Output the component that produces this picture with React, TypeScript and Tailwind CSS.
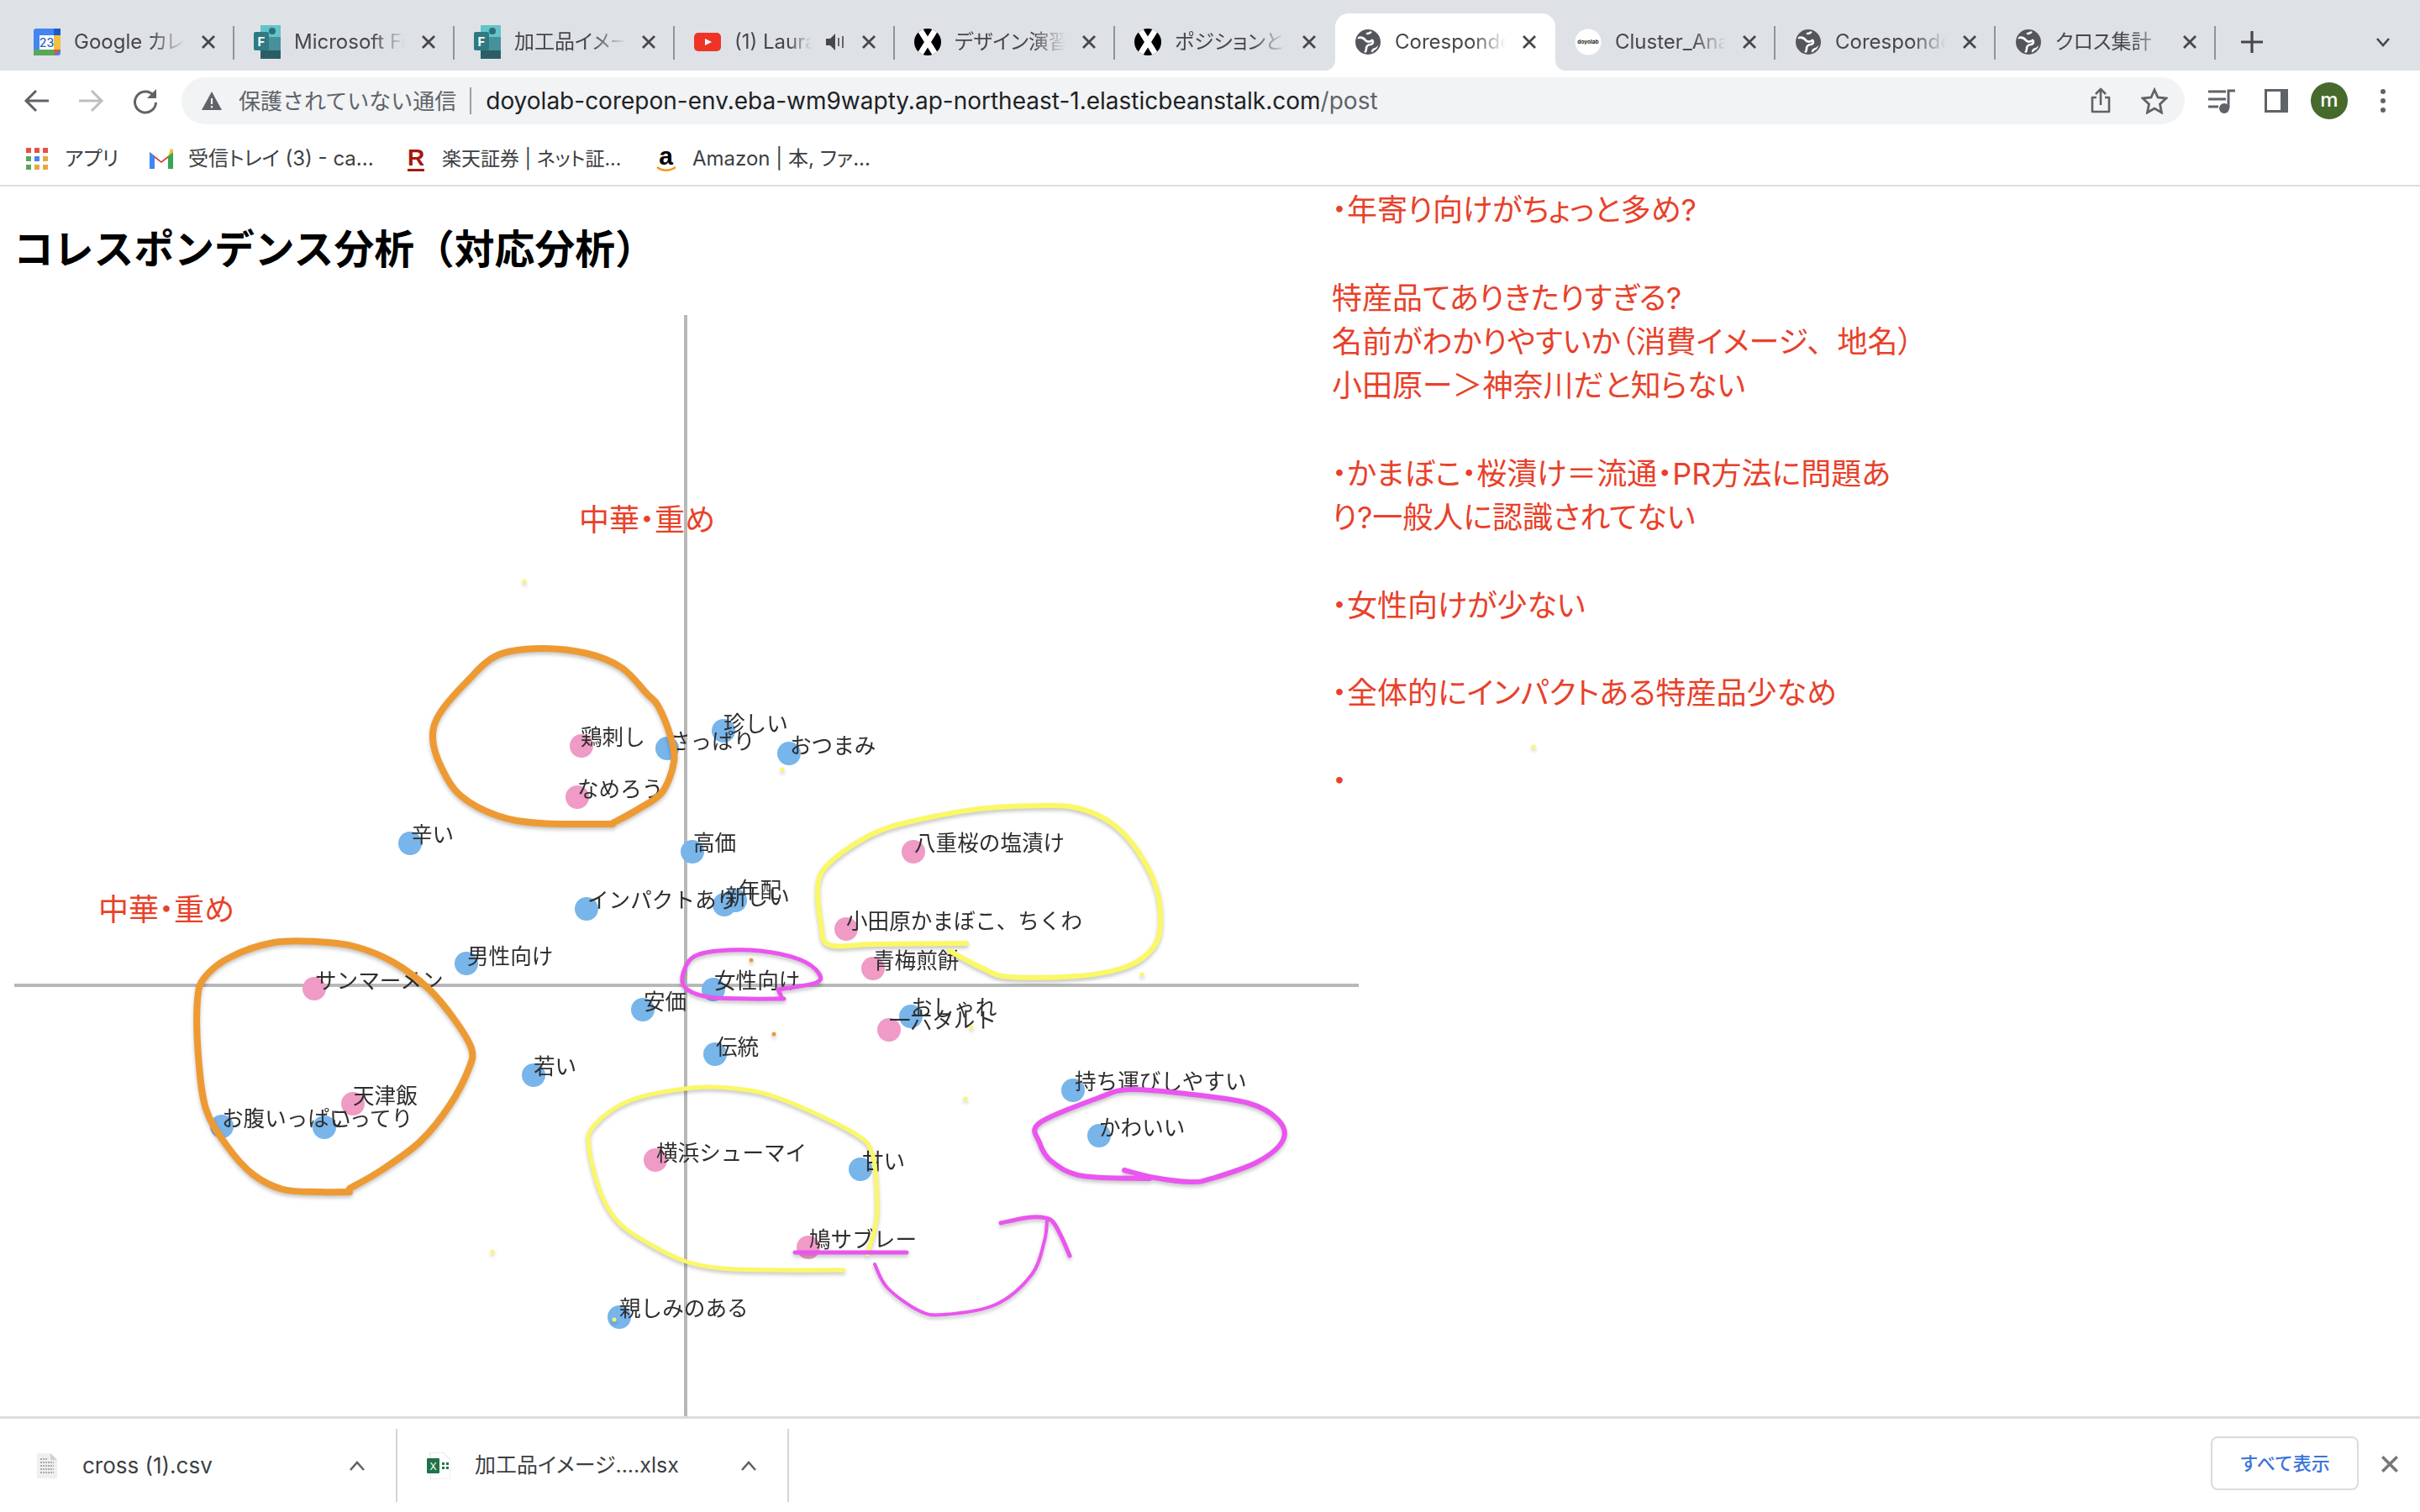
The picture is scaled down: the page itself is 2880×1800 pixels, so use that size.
import type { ReactNode } from 'react'

type Pt = [number, number]

const CHART_X = 17
const CHART_Y = 375

const points = [
  { label: '鶏刺し', x: 692, y: 888, tx: 692, ty: 878, kind: 'pink' },
  { label: 'さっぱり', x: 794, y: 891, tx: 797, ty: 883, kind: 'blue' },
  { label: '珍しい', x: 861, y: 870, tx: 862, ty: 862, kind: 'blue' },
  { label: 'おつまみ', x: 939, y: 897, tx: 941, ty: 888, kind: 'blue' },
  { label: 'なめろう', x: 687, y: 949, tx: 688, ty: 940, kind: 'pink' },
  { label: '辛い', x: 488, y: 1004, tx: 490, ty: 994, kind: 'blue' },
  { label: '高価', x: 824, y: 1014, tx: 826, ty: 1004, kind: 'blue' },
  { label: 'インパクトあり', x: 698, y: 1082, tx: 700, ty: 1072, kind: 'blue' },
  { label: '新しい', x: 862, y: 1077, tx: 864, ty: 1068, kind: 'blue' },
  { label: '年配', x: 875, y: 1072, tx: 880, ty: 1060, kind: 'blue' },
  { label: '八重桜の塩漬け', x: 1087, y: 1014, tx: 1089, ty: 1004, kind: 'pink' },
  { label: '小田原かまぼこ、ちくわ', x: 1007, y: 1106, tx: 1008, ty: 1097, kind: 'pink' },
  { label: '青梅煎餅', x: 1039, y: 1153, tx: 1040, ty: 1144, kind: 'pink' },
  { label: '女性向け', x: 849, y: 1178, tx: 851, ty: 1168, kind: 'blue' },
  { label: '男性向け', x: 555, y: 1147, tx: 557, ty: 1139, kind: 'blue' },
  { label: 'サンマーメン', x: 374, y: 1177, tx: 376, ty: 1168, kind: 'pink' },
  { label: '安価', x: 765, y: 1202, tx: 767, ty: 1193, kind: 'blue' },
  { label: 'おしゃれ', x: 1084, y: 1210, tx: 1085, ty: 1200, kind: 'blue' },
  { label: '一六タルト', x: 1058, y: 1226, tx: 1059, ty: 1215, kind: 'pink' },
  { label: '伝統', x: 851, y: 1255, tx: 853, ty: 1247, kind: 'blue' },
  { label: '若い', x: 635, y: 1280, tx: 636, ty: 1270, kind: 'blue' },
  { label: '天津飯', x: 420, y: 1314, tx: 421, ty: 1305, kind: 'pink' },
  { label: 'お腹いっぱい', x: 264, y: 1341, tx: 265, ty: 1332, kind: 'blue' },
  { label: 'こってり', x: 386, y: 1342, tx: 393, ty: 1332, kind: 'blue' },
  { label: '横浜シューマイ', x: 780, y: 1381, tx: 782, ty: 1373, kind: 'pink' },
  { label: '甘い', x: 1024, y: 1392, tx: 1027, ty: 1383, kind: 'blue' },
  { label: '持ち運びしやすい', x: 1277, y: 1298, tx: 1280, ty: 1288, kind: 'blue' },
  { label: 'かわいい', x: 1308, y: 1352, tx: 1309, ty: 1343, kind: 'blue' },
  { label: '鳩サブレー', x: 962, y: 1485, tx: 964, ty: 1476, kind: 'pink' },
  { label: '親しみのある', x: 737, y: 1568, tx: 738, ty: 1558, kind: 'blue' },
]

// hand drawn marks, page coordinates
const strokes: { color: string; width: number; pts: Pt[] }[] = [
  {
    color: '#ee9a33',
    width: 8,
    pts: [[729, 981], [643, 980], [592, 971], [548, 947], [525, 913], [515, 879], [523, 850], [556, 811], [592, 780], [643, 772], [699, 778], [740, 795], [770, 826], [783, 840], [798, 877], [802, 907], [788, 943], [760, 963], [729, 980]],
  },
  {
    color: '#ee9a33',
    width: 8,
    pts: [[416, 1419], [382, 1419], [337, 1416], [301, 1398], [270, 1364], [245, 1320], [236, 1257], [235, 1190], [244, 1163], [275, 1139], [326, 1122], [377, 1121], [423, 1127], [469, 1146], [510, 1177], [541, 1214], [561, 1248], [558, 1272], [535, 1316], [500, 1359], [454, 1393], [416, 1415]],
  },
  {
    color: '#fbf866',
    width: 6,
    pts: [[1150, 1123], [1040, 1124], [987, 1125], [977, 1100], [974, 1050], [992, 1023], [1038, 993], [1084, 978], [1165, 963], [1242, 959], [1283, 962], [1323, 980], [1354, 1013], [1377, 1060], [1380, 1110], [1364, 1137], [1334, 1153], [1283, 1162], [1201, 1163], [1170, 1153], [1130, 1132]],
  },
  {
    color: '#fbf866',
    width: 5,
    pts: [[1004, 1512], [928, 1512], [860, 1510], [817, 1502], [775, 1482], [738, 1457], [716, 1423], [701, 1367], [707, 1340], [750, 1310], [824, 1295], [885, 1297], [934, 1310], [1013, 1347], [1038, 1373], [1044, 1433], [1041, 1463], [1032, 1493]],
  },
  {
    color: '#ea55f0',
    width: 5,
    pts: [[926, 1178], [971, 1170], [974, 1158], [951, 1142], [905, 1132], [854, 1132], [824, 1140], [812, 1163], [818, 1178], [844, 1187], [890, 1189], [933, 1189]],
  },
  { color: '#ea55f0', width: 5, pts: [[926, 1178], [930, 1187]] },
  { color: '#ea55f0', width: 5, pts: [[946, 1491], [1079, 1491]] },
  {
    color: '#ea55f0',
    width: 4,
    pts: [[1041, 1505], [1056, 1533], [1093, 1560], [1123, 1565], [1185, 1553], [1228, 1517], [1243, 1477], [1246, 1453]],
  },
  { color: '#ea55f0', width: 5, pts: [[1191, 1456], [1227, 1449], [1250, 1452], [1262, 1470], [1273, 1495]] },
  {
    color: '#ea55f0',
    width: 6,
    pts: [[1338, 1393], [1374, 1402], [1417, 1407], [1442, 1403], [1497, 1383], [1527, 1357], [1521, 1333], [1485, 1313], [1411, 1302], [1344, 1297], [1307, 1307], [1237, 1337], [1237, 1360], [1252, 1383], [1289, 1400], [1368, 1403]],
  },
]

const specks: [number, number, string][] = [
  [624, 692, '#fbf866'],
  [931, 916, '#fbf866'],
  [894, 1143, '#ee9a33'],
  [921, 1231, '#ee9a33'],
  [1359, 1160, '#fbf866'],
  [1156, 1223, '#fbf866'],
  [1149, 1308, '#fbf866'],
  [731, 1571, '#fbf866'],
  [586, 1490, '#fbf866'],
  [1825, 889, '#fbf866'],
]

const notes = [
  '・年寄り向けがちょっと多め?',
  '',
  '特産品てありきたりすぎる?',
  '名前がわかりやすいか（消費イメージ、\u2002地名）',
  '小田原ー＞神奈川だと知らない',
  '',
  '・かまぼこ・桜漬け＝流通・PR方法に問題あ',
  'り?一般人に認識されてない',
  '',
  '・女性向けが少ない',
  '',
  '・全体的にインパクトある特産品少なめ',
  '',
  '・',
]

const tabs: { title: string; icon: ReactNode; active?: boolean; audio?: boolean; sep?: boolean }[] = [
  { title: 'Google カレンダー', icon: <CalendarIcon />, sep: true },
  { title: 'Microsoft Forms', icon: <FormsIcon />, sep: true },
  { title: '加工品イメージ調査', icon: <FormsIcon />, sep: true },
  { title: '(1) Laura Branigan', icon: <YoutubeIcon />, audio: true, sep: true },
  { title: 'デザイン演習', icon: <CrossIcon />, sep: true },
  { title: 'ポジションと戦略', icon: <CrossIcon /> },
  { title: 'Coresponde', icon: <GlobeIcon />, active: true },
  { title: 'Cluster_Analysis', icon: <DoyolabIcon />, sep: true },
  { title: 'Corespondence', icon: <GlobeIcon />, sep: true },
  { title: 'クロス集計', icon: <GlobeIcon />, sep: true },
]

function smooth(pts: Pt[]) {
  let d = `M${pts[0][0]} ${pts[0][1]}`
  for (let i = 0; i < pts.length - 1; i++) {
    const p0 = pts[Math.max(i - 1, 0)]
    const p1 = pts[i]
    const p2 = pts[i + 1]
    const p3 = pts[Math.min(i + 2, pts.length - 1)]
    const c1x = p1[0] + (p2[0] - p0[0]) / 6
    const c1y = p1[1] + (p2[1] - p0[1]) / 6
    const c2x = p2[0] - (p3[0] - p1[0]) / 6
    const c2y = p2[1] - (p3[1] - p1[1]) / 6
    d += ` C${c1x} ${c1y} ${c2x} ${c2y} ${p2[0]} ${p2[1]}`
  }
  return d
}

function CalendarIcon() {
  return (
    <svg viewBox="0 0 32 32" className="h-8 w-8 shrink-0">
      <rect width="32" height="32" rx="3" fill="#4285f4" />
      <rect x="24" width="8" height="8" fill="#1a5bc4" />
      <rect x="24" y="8" width="8" height="17" fill="#f4bf3e" />
      <rect y="25" width="26" height="7" fill="#57a85b" />
      <path d="M25 25h7l-7 7z" fill="#e8503e" />
      <rect x="7" y="8" width="17" height="17" fill="#fff" />
      <text x="15.5" y="22" textAnchor="middle" fontSize="14" fontWeight="500" fill="#2a62c8" fontFamily="Inter, sans-serif">23</text>
    </svg>
  )
}

function FormsIcon() {
  return (
    <svg viewBox="0 0 32 40" className="h-10 w-8 shrink-0">
      <rect x="8" y="0" width="24" height="20" fill="#62c4c9" />
      <circle cx="22" cy="7" r="4" fill="#2d6f78" />
      <rect x="8" y="20" width="24" height="20" fill="#2b5d66" />
      <rect x="16" y="14" width="16" height="16" fill="#46919a" />
      <rect x="0" y="8" width="18" height="22" rx="2" fill="#2f7a82" />
      <text x="9" y="25" textAnchor="middle" fontSize="15" fontWeight="700" fill="#fff" fontFamily="Inter, sans-serif">F</text>
    </svg>
  )
}

function YoutubeIcon() {
  return (
    <svg viewBox="0 0 32 24" className="h-6 w-8 shrink-0">
      <rect width="32" height="22" y="1" rx="5" fill="#ee3426" />
      <path d="M13 8l8 4-8 4z" fill="#fff" />
    </svg>
  )
}

function CrossIcon() {
  return (
    <svg viewBox="0 0 32 32" className="h-8 w-8 shrink-0">
      <clipPath id="cross-clip">
        <circle cx="16" cy="16" r="16" />
      </clipPath>
      <circle cx="16" cy="16" r="16" fill="#000" />
      <path d="M6 0l20 32M26 0L6 32" stroke="#fff" strokeWidth="7" clipPath="url(#cross-clip)" />
    </svg>
  )
}

function GlobeIcon() {
  return (
    <svg viewBox="0 0 32 32" className="h-8 w-8 shrink-0">
      <circle cx="16" cy="16" r="14" fill="#54565b" />
      <g fill="none" stroke="#fff" strokeWidth="2.600" strokeLinecap="round">
        <path d="M4 11c4-1 7 0 9 3 2 2 5 2 8 0" />
        <path d="M21 14c2 2 1 4-2 5-3 0-5 2-5 5 0 2-1 4-2 5" />
        <path d="M21 28c0-2 2-4 4-4 1 0 2-1 3-2" />
        <path d="M20 3c-1 2-3 3-5 3" />
      </g>
      <circle cx="16" cy="16" r="14" fill="none" stroke="#54565b" strokeWidth="2" />
    </svg>
  )
}

function DoyolabIcon() {
  return (
    <svg viewBox="0 0 32 32" className="h-8 w-8 shrink-0">
      <circle cx="16" cy="16" r="15.5" fill="#fff" />
      <text x="16" y="18" textAnchor="middle" fontSize="6.5" fontWeight="700" fill="#222" fontFamily="Inter, sans-serif">doyolab</text>
    </svg>
  )
}

function CloseIcon({ size = 'h-6 w-6', color = '#45474a' }: { size?: string; color?: string }) {
  return (
    <svg viewBox="0 0 24 24" className={`${size} shrink-0`}>
      <path d="M5 5l14 14M19 5L5 19" stroke={color} strokeWidth="2.8" fill="none" />
    </svg>
  )
}

function Tab({ tab }: { tab: (typeof tabs)[number] }) {
  return (
    <div
      className={`relative flex h-[68px] w-[262px] shrink-0 items-center gap-4 pl-[23px] pr-[19px] ${
        tab.active ? 'rounded-t-[16px] bg-white' : ''
      }`}
    >
      {tab.active && (
        <>
          <div className="absolute -left-3 bottom-0 h-3 w-3 bg-white">
            <div className="h-full w-full rounded-br-[12px] bg-[#dee1e6]" />
          </div>
          <div className="absolute -right-3 bottom-0 h-3 w-3 bg-white">
            <div className="h-full w-full rounded-bl-[12px] bg-[#dee1e6]" />
          </div>
        </>
      )}
      <div className="flex w-8 shrink-0 justify-center">{tab.icon}</div>
      <div className="min-w-0 flex-1 overflow-hidden whitespace-nowrap text-[24px] leading-8 text-[#45474a] [font-feature-settings:'palt'] [mask-image:linear-gradient(90deg,#000_70%,transparent_100%)]">
        {tab.title}
      </div>
      {tab.audio && (
        <svg viewBox="0 0 24 24" className="h-6 w-6 shrink-0">
          <path d="M1 8h5l6-6v20l-6-6H1z" fill="#45474a" />
          <path d="M16 7v10M21 5v14" stroke="#45474a" strokeWidth="1.6" />
        </svg>
      )}
      <CloseIcon />
      {tab.sep && <div className="absolute right-0 top-[15px] h-10 w-[2px] bg-[#909398]" />}
    </div>
  )
}

function TabStrip() {
  return (
    <div className="flex h-[84px] shrink-0 items-end bg-[#dee1e6] pl-[17px]">
      {tabs.map((tab, index) => (
        <Tab key={index} tab={tab} />
      ))}
      <div className="mb-[18px] ml-[27px] flex w-8 justify-center">
        <svg viewBox="0 0 32 32" className="h-8 w-8">
          <path d="M16 3v26M3 16h26" stroke="#45474a" strokeWidth="3.2" />
        </svg>
      </div>
      <div className="mb-[22px] ml-[124px] flex w-8 justify-center">
        <svg viewBox="0 0 24 24" className="h-6 w-6">
          <path d="M5 8l7 8 7-8" stroke="#45474a" strokeWidth="2.6" fill="none" />
        </svg>
      </div>
    </div>
  )
}

function Toolbar() {
  return (
    <div className="flex h-[84px] shrink-0 items-center bg-white pb-3">
      <div className="flex w-[216px] shrink-0 items-center pl-[28px]">
        <svg viewBox="0 0 32 32" className="h-8 w-8">
          <path d="M30 16H4M15 4L3 16l12 12" stroke="#5f6368" strokeWidth="3" fill="none" />
        </svg>
        <svg viewBox="0 0 32 32" className="ml-[32px] h-8 w-8">
          <path d="M2 16h26M17 4l12 12-12 12" stroke="#bcbec2" strokeWidth="3" fill="none" />
        </svg>
        <svg viewBox="0 0 32 32" className="ml-[33px] h-8 w-8">
          <path d="M26 10a12.500 12.500 0 1 0 2.500 8" stroke="#5f6368" strokeWidth="3" fill="none" />
          <path d="M29 2v11H18z" fill="#5f6368" />
        </svg>
      </div>
      <div className="flex h-14 w-[2384px] shrink-0 items-center rounded-full bg-[#f1f3f4] pl-[24px] pr-[20px]">
        <svg viewBox="0 0 24 24" className="h-6 w-6 shrink-0">
          <path d="M12 1l12 22H0z" fill="#5f6368" />
          <path d="M12 9v7M12 18v2.500" stroke="#f1f3f4" strokeWidth="2.200" />
        </svg>
        <span className="ml-[20px] whitespace-nowrap text-[26px] text-[#5f6368]">保護されていない通信</span>
        <div className="ml-[16px] h-8 w-[2px] bg-[#9a9da1]" />
        <span className="ml-[17px] whitespace-nowrap text-[28px] text-[#202124]">
          doyolab-corepon-env.eba-wm9wapty.ap-northeast-1.elasticbeanstalk.com<span className="text-[#5f6368]">/post</span>
        </span>
        <svg viewBox="0 0 28 32" className="ml-auto h-8 w-7 shrink-0">
          <path d="M9 12H4v17h20V12h-5M14 21V3M8 8l6-6 6 6" stroke="#5f6368" strokeWidth="2.600" fill="none" strokeLinejoin="round" />
        </svg>
        <svg viewBox="0 0 32 32" className="ml-[34px] h-8 w-8 shrink-0">
          <path d="M16 3l4 9 10 1-7.500 7 2 10-8.500-5-8.500 5 2-10L2 13l10-1z" stroke="#5f6368" strokeWidth="2.800" fill="none" />
        </svg>
      </div>
      <svg viewBox="0 0 34 30" className="ml-[27px] h-[30px] w-[34px] shrink-0">
        <path d="M1 4h21M1 13h21M1 22h12M25 24V3h8" stroke="#5f6368" strokeWidth="3" fill="none" />
        <circle cx="20" cy="24" r="6" fill="#5f6368" />
      </svg>
      <svg viewBox="0 0 28 28" className="ml-[34px] h-7 w-7 shrink-0">
        <rect width="28" height="28" fill="#5f6368" />
        <rect x="3" y="3" width="16" height="22" fill="#fff" />
      </svg>
      <div className="ml-[27px] flex h-11 w-11 shrink-0 items-center justify-center rounded-full bg-[#456a2b] pb-[3px] text-[24px] font-medium text-white">
        m
      </div>
      <div className="ml-[39px] flex flex-col gap-[5px]">
        <div className="h-[6px] w-[6px] rounded-full bg-[#5f6368]" />
        <div className="h-[6px] w-[6px] rounded-full bg-[#5f6368]" />
        <div className="h-[6px] w-[6px] rounded-full bg-[#5f6368]" />
      </div>
    </div>
  )
}

function BookmarksBar() {
  return (
    <div className="flex h-[54px] shrink-0 items-center border-b-2 border-[#dadce0] bg-white pb-[10px] pl-[31px] text-[24px] text-[#3c4043] [font-feature-settings:'palt']">
      <svg viewBox="0 0 26 26" className="h-[26px] w-[26px] shrink-0">
        <path d="M0 0h6v6H0zM10 0h6v6h-6zM20 0h6v6h-6z" fill="#e8503e" />
        <path d="M0 10h6v6H0z" fill="#57a85b" />
        <path d="M10 10h6v6h-6z" fill="#4285f4" />
        <path d="M20 10h6v6h-6z" fill="#e8a83e" />
        <path d="M0 20h6v6H0z" fill="#57a85b" />
        <path d="M10 20h6v6h-6zM20 20h6v6h-6z" fill="#e8a83e" />
      </svg>
      <span className="ml-5 w-[63px] whitespace-nowrap">アプリ</span>
      <svg viewBox="0 0 28 24" className="ml-[38px] h-6 w-7 shrink-0">
        <path d="M0 4l14 11L28 4v20h-6V11l-8 6-8-6v13H0z" fill="#d93a2d" />
        <path d="M0 4v20h6V9z" fill="#4285f4" />
        <path d="M28 4v20h-6V9z" fill="#34a853" />
        <path d="M22 9l6-5V1l-3-1z" fill="#f4bf3e" />
      </svg>
      <span className="ml-[18px] w-[221px] whitespace-nowrap">受信トレイ (3) - ca...</span>
      <div className="ml-[40px] flex w-5 shrink-0 flex-col items-center">
        <span className="text-[28px] font-bold leading-[26px] text-[#a8170f] [font-family:'Liberation_Sans',sans-serif]">R</span>
        <div className="h-[3px] w-5 bg-[#a8170f]" />
      </div>
      <span className="ml-[21px] w-[215px] whitespace-nowrap text-[23px]">楽天証券 | ネット証...</span>
      <div className="ml-[39px] flex w-[25px] shrink-0 flex-col items-center">
        <span className="text-[30px] font-bold leading-[24px] text-black [font-family:'Liberation_Sans',sans-serif]">a</span>
        <svg viewBox="0 0 24 7" className="h-[7px] w-6">
          <path d="M1 1c6 5 15 5 22 0" stroke="#f09a1f" strokeWidth="2.500" fill="none" />
        </svg>
      </div>
      <span className="ml-[19px] whitespace-nowrap">Amazon | 本, ファ...</span>
    </div>
  )
}

function Chart() {
  return (
    <div className="relative mt-[48px] h-[1311px] w-[1600px] blur-[0.5px]">
      <div className="absolute bottom-0 left-[797px] top-0 w-1 bg-[#b8b8b8]" />
      <div className="absolute inset-x-0 top-[796px] h-1 bg-[#b8b8b8]" />
      {points.map((p) => (
        <div
          key={p.label}
          className={`absolute h-7 w-7 -translate-x-1/2 -translate-y-1/2 rounded-full ${
            p.kind === 'pink' ? 'bg-[#ef9bc6]' : 'bg-[#78b5ea]'
          }`}
          style={{ left: p.x - CHART_X, top: p.y - CHART_Y }}
        />
      ))}
      {points.map((p) => (
        <div
          key={p.label}
          className="absolute -translate-y-1/2 whitespace-nowrap text-[25.6px] leading-8 text-[#2e2e2e]"
          style={{ left: p.tx - CHART_X - 1, top: p.ty - CHART_Y }}
        >
          {p.label}
        </div>
      ))}
    </div>
  )
}

function Ink() {
  return (
    <svg
      viewBox="0 222 2880 1464"
      className="pointer-events-none absolute inset-0 h-full w-full drop-shadow-[0_3px_2px_rgba(0,0,0,0.22)]"
      fill="none"
      strokeLinecap="round"
      strokeLinejoin="round"
    >
      {strokes.map((s, index) => (
        <path key={index} d={smooth(s.pts)} stroke={s.color} strokeWidth={s.width} />
      ))}
      {specks.map(([x, y, color], index) => (
        <circle key={index} cx={x} cy={y} r="2.500" fill={color} />
      ))}
    </svg>
  )
}

function RedLabel({ className }: { className: string }) {
  return (
    <div
      className={`absolute -translate-y-1/2 whitespace-nowrap text-[36px] leading-[44px] text-[#e8412a] [font-feature-settings:'palt'] ${className}`}
    >
      中華・重め
    </div>
  )
}

function Content() {
  return (
    <main className="relative flex min-h-0 flex-1 bg-white">
      <div className="flex w-[1585px] shrink-0 flex-col pl-[17px] pt-[45px]">
        <h1 className="-ml-px whitespace-nowrap text-[47.8px] font-bold leading-[60px] text-black">
          コレスポンデンス分析（対応分析）
        </h1>
        <Chart />
      </div>
      <div className="pt-[2px] text-[36px] leading-[52.300px] text-[#e8412a] [font-feature-settings:'palt']">
        {notes.map((line, index) => (
          <div key={index} className="h-[52.300px] whitespace-nowrap">
            {line}
          </div>
        ))}
      </div>
      <RedLabel className="left-[689px] top-[397px]" />
      <RedLabel className="left-[117px] top-[861px]" />
      <Ink />
    </main>
  )
}

function DownloadItem({ name, icon, width, iconBox, text }: { name: string; icon: ReactNode; width: string; iconBox: string; text: string }) {
  return (
    <div className={`flex h-[87px] shrink-0 items-center border-r-2 border-[#d5d5d5] ${width}`}>
      <div className={`flex shrink-0 justify-center ${iconBox}`}>{icon}</div>
      <span className={`whitespace-nowrap text-[#3c4043] [font-feature-settings:'palt'] ${text}`}>{name}</span>
      <svg viewBox="0 0 20 12" className="ml-auto mr-[36px] h-3 w-5 shrink-0">
        <path d="M2 11l8-9 8 9" stroke="#5f6368" strokeWidth="2.600" fill="none" />
      </svg>
    </div>
  )
}

function DownloadBar() {
  return (
    <div className="flex h-[114px] shrink-0 items-center border-t-[3px] border-[#dddddd] bg-white">
      <DownloadItem
        name="cross (1).csv"
        width="w-[473px]"
        iconBox="w-[98px] pl-[14px]"
        text="text-[26px]"
        icon={
          <svg viewBox="0 0 24 30" className="h-[30px] w-6">
            <path d="M0 0h16l8 8v22H0z" fill="#efefef" />
            <path d="M16 0l8 8h-8z" fill="#d0d0d0" />
            <path d="M4 7h9M4 11h16M4 15h16M4 19h16M4 23h16" stroke="#aaaaaa" strokeWidth="2" strokeDasharray="2 1" />
          </svg>
        }
      />
      <DownloadItem
        name="加工品イメージ....xlsx"
        width="w-[466px]"
        iconBox="w-[92px] pl-[6px]"
        text="text-[25px]"
        icon={
          <svg viewBox="0 0 28 32" className="h-8 w-7">
            <path d="M4 0h15l9 9v23H4z" fill="#fff" stroke="#e0e0e0" />
            <rect y="7" width="15" height="18" rx="1" fill="#217346" />
            <path d="M18 12h3v3h-3zM23 12h3v3h-3zM18 17h3v3h-3zM23 17h3v3h-3z" fill="#217346" />
            <text x="7.500" y="21" textAnchor="middle" fontSize="12" fill="#fff" fontFamily="Inter, sans-serif">X</text>
          </svg>
        }
      />
      <div className="mb-[5px] ml-auto flex h-[64px] w-[176px] items-center justify-center rounded-[8px] border-2 border-[#dcdcdc] text-[22px] font-medium text-[#3b74d9]">
        すべて表示
      </div>
      <div className="mb-[3px] ml-[22px] mr-[21px]">
        <CloseIcon size="h-[30px] w-[30px]" color="#777777" />
      </div>
    </div>
  )
}

export default function App() {
  return (
    <div className="flex h-[1800px] w-[2880px] flex-col overflow-hidden bg-white [font-family:Inter,'Noto_Sans_CJK_JP',sans-serif]">
      <TabStrip />
      <Toolbar />
      <BookmarksBar />
      <Content />
      <DownloadBar />
    </div>
  )
}
